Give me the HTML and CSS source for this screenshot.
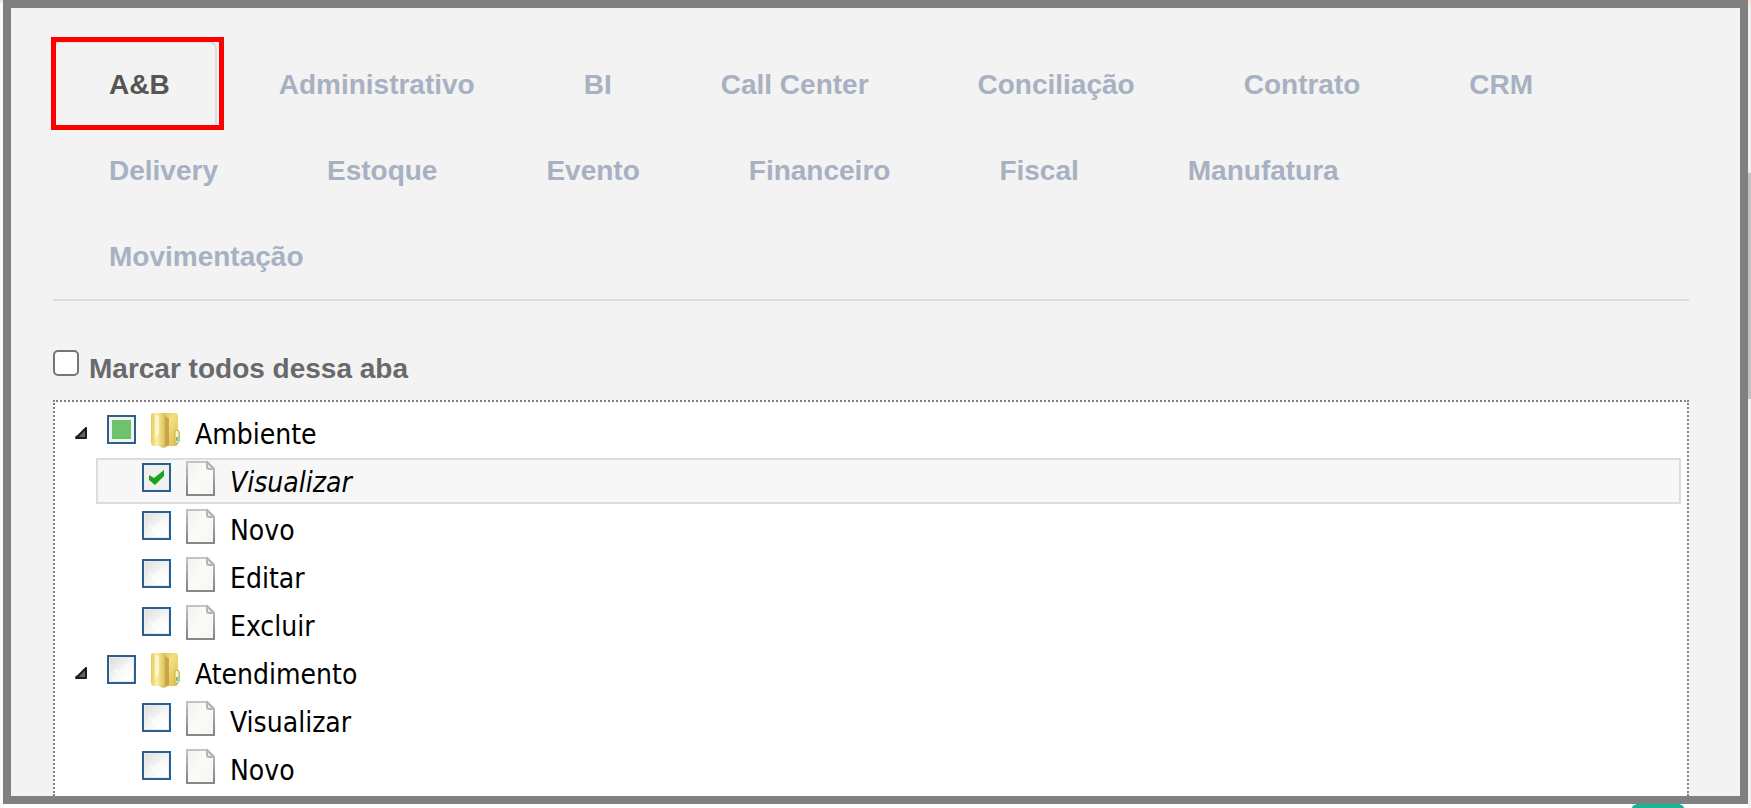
FILE: index.html
```html
<!DOCTYPE html>
<html lang="pt-BR">
<head>
  <meta charset="UTF-8">
  <meta name="viewport" content="width=device-width, initial-scale=1.0">
  <title>Permissões</title>
  <link rel="stylesheet" href="styles.css">
</head>
<body>
  <svg class="sprite" aria-hidden="true">
    <defs>
      <linearGradient id="paper" x1="0" y1="0" x2="1" y2="1">
        <stop offset="0" stop-color="#f2f3ef"/>
        <stop offset=".5" stop-color="#fbfbf8"/>
        <stop offset="1" stop-color="#f4f6f1"/>
      </linearGradient>
      <linearGradient id="edge" x1="0" y1="0" x2="0" y2="1">
        <stop offset="0" stop-color="#c3c5c1"/>
        <stop offset="1" stop-color="#7f827e"/>
      </linearGradient>
      <linearGradient id="goldFront" x1="0" y1="0" x2="1" y2="0">
        <stop offset="0" stop-color="#e3c75a"/>
        <stop offset=".4" stop-color="#fbf0a8"/>
        <stop offset="1" stop-color="#dcbf58"/>
      </linearGradient>
      <linearGradient id="goldBack" x1="0" y1="0" x2="1" y2="1">
        <stop offset="0" stop-color="#d5b44c"/>
        <stop offset=".35" stop-color="#f3e083"/>
        <stop offset="1" stop-color="#d9b840"/>
      </linearGradient>
      <linearGradient id="arrow" x1="0" y1="0" x2="1" y2="1">
        <stop offset="0" stop-color="#333"/>
        <stop offset="1" stop-color="#777"/>
      </linearGradient>
    </defs>
    <symbol id="i-doc" viewBox="0 0 29 35">
      <path d="M1 1h20l7 7v26H1z" fill="url(#paper)" stroke="url(#edge)" stroke-width="2"/>
      <path d="M21 1v5q0 2 2 2h5z" fill="#f0f0ee" stroke="#b3b5b1" stroke-width="2"/>
      <path d="M0 34h29" stroke="#868984" stroke-width="2"/>
    </symbol>
    <symbol id="i-folder" viewBox="0 0 29 35">
      <path d="M10 0h14q3 0 3 3v14l2 2v9l-2 2q0 3-3 3H12z" fill="url(#goldBack)"/>
      <path d="M12 1l6 5v26l-5 3z" fill="#c9a548"/>
      <path d="M3 0h8q3 1 3 4v30l-3 1-3-2H4q-4 0-4-3V3q0-3 3-3z" fill="url(#goldFront)"/>
      <path d="M4 3l4 1v16l-4 6z" fill="#fffbe0" opacity=".7"/>
      <path d="M24 19q0-2 2-2t2 2v9q0 2-2 2t-2-2z" fill="#f7f4d8" stroke="#d0ad3d"/>
      <path d="M25 24h2v4h-2z" fill="#58bfd8"/>
    </symbol>
    <symbol id="i-arrow" viewBox="0 0 14 13">
      <path d="M12 1v10H2q0-1 2-2z" fill="url(#arrow)" stroke="#1c1c1c" stroke-width="2" stroke-linejoin="round"/>
    </symbol>
  </svg>

  <div class="edge-left"></div>

  <main class="frame">
    <nav class="tabs" role="tablist">
      <button class="tab active" role="tab" aria-selected="true">A&amp;B</button>
      <button class="tab" role="tab">Administrativo</button>
      <button class="tab" role="tab">BI</button>
      <button class="tab" role="tab">Call Center</button>
      <button class="tab" role="tab">Conciliação</button>
      <button class="tab" role="tab">Contrato</button>
      <button class="tab" role="tab">CRM</button>
      <button class="tab" role="tab">Delivery</button>
      <button class="tab" role="tab">Estoque</button>
      <button class="tab" role="tab">Evento</button>
      <button class="tab" role="tab">Financeiro</button>
      <button class="tab" role="tab">Fiscal</button>
      <button class="tab" role="tab">Manufatura</button>
      <button class="tab" role="tab">Movimentação</button>
    </nav>

    <div class="mark-all">
      <input type="checkbox" id="markAll">
      <label for="markAll">Marcar todos dessa aba</label>
    </div>

    <ul class="tree">
      <li>
        <div class="node">
          <button class="toggle" aria-label="Recolher Ambiente"><svg><use href="#i-arrow"/></svg></button>
          <input type="checkbox" class="check partial" id="amb">
          <svg class="icon"><use href="#i-folder"/></svg>
          <label for="amb">Ambiente</label>
        </div>
        <ul>
          <li class="node selected">
            <input type="checkbox" class="check" id="amb-vis" checked>
            <svg class="icon"><use href="#i-doc"/></svg>
            <label for="amb-vis">Visualizar</label>
          </li>
          <li class="node">
            <input type="checkbox" class="check" id="amb-novo">
            <svg class="icon"><use href="#i-doc"/></svg>
            <label for="amb-novo">Novo</label>
          </li>
          <li class="node">
            <input type="checkbox" class="check" id="amb-edit">
            <svg class="icon"><use href="#i-doc"/></svg>
            <label for="amb-edit">Editar</label>
          </li>
          <li class="node">
            <input type="checkbox" class="check" id="amb-exc">
            <svg class="icon"><use href="#i-doc"/></svg>
            <label for="amb-exc">Excluir</label>
          </li>
        </ul>
      </li>
      <li>
        <div class="node">
          <button class="toggle" aria-label="Recolher Atendimento"><svg><use href="#i-arrow"/></svg></button>
          <input type="checkbox" class="check" id="ate">
          <svg class="icon"><use href="#i-folder"/></svg>
          <label for="ate">Atendimento</label>
        </div>
        <ul>
          <li class="node">
            <input type="checkbox" class="check" id="ate-vis">
            <svg class="icon"><use href="#i-doc"/></svg>
            <label for="ate-vis">Visualizar</label>
          </li>
          <li class="node">
            <input type="checkbox" class="check" id="ate-novo">
            <svg class="icon"><use href="#i-doc"/></svg>
            <label for="ate-novo">Novo</label>
          </li>
        </ul>
      </li>
    </ul>
  </main>

  <div class="edge-right"><div class="thumb"></div></div>
  <button class="chat" aria-label="Chat"></button>
</body>
</html>
```
FILE: styles.css
```css
* {
  box-sizing: border-box;
}
body {
  display: flex;
  position: relative;
  margin: 0;
  height: 100vh;
  overflow: hidden;
  background: #fff;
  font-family: "Liberation Sans", Arial, sans-serif;
}
ul {
  list-style: none;
  margin: 0;
  padding: 0;
}
button {
  border: none;
  background: none;
  padding: 0;
  font: inherit;
  cursor: pointer;
}
.sprite {
  position: absolute;
  width: 0;
  height: 0;
}

/* page edges around the frame */
.edge-left,
.edge-right {
  width: 3px;
  border-top: 3px solid #fbe0da;
}
.edge-left {
  background: #fafafa;
}
.edge-right {
  background: #f0f0f0;
}
.thumb {
  height: 226px;
  margin-top: 170px;
  background: #c1c1c1;
}

.frame {
  display: flex;
  flex-direction: column;
  flex: 1;
  position: relative;
  z-index: 1;
  margin-bottom: 4px;
  padding: 33px 51px 0 42px;
  border: 8px solid #808080;
  background: #f3f3f3;
  overflow: hidden;
}

/* tabs */
.tabs {
  display: flex;
  flex-wrap: wrap;
  padding-right: 40px;
  border-bottom: 2px solid #ddd;
}
.tab {
  position: relative;
  height: 86px;
  margin-right: 6px;
  padding: 0 45px 0 54px;
  border: 2px solid transparent;
  border-bottom: none;
  border-radius: 8px 8px 0 0;
  font-size: 28px;
  font-weight: bold;
  color: #a7b1c2;
}
.tab.active {
  border-color: #ddd;
  color: #555;
}
.tab.active::after {
  content: "";
  position: absolute;
  top: -6px;
  right: -9px;
  bottom: -3px;
  left: -4px;
  border: 5px solid #f00;
}

.mark-all {
  display: flex;
  gap: 10px;
  margin-top: 49px;
  height: 50px;
  font-size: 28px;
  line-height: 38px;
  font-weight: bold;
  color: #676a6c;
}
.mark-all input {
  appearance: none;
  width: 26px;
  height: 26px;
  margin: 0;
  border: 2px solid #767676;
  border-radius: 5px;
  background: #fff;
}

/* tree */
.tree {
  flex: 1;
  padding: 7px 6px 0;
  border: 2px dotted #808080;
  border-bottom: none;
  background: #fff;
  font-family: "DejaVu Sans Condensed", Tahoma, "Noto Sans", sans-serif;
  font-size: 28px;
  color: #000;
}
.tree ul {
  padding-left: 35px;
}
.node {
  display: flex;
  align-items: flex-start;
  height: 48px;
  padding: 4px 0 0 46px;
}
.tree div.node {
  padding-left: 13px;
}
.toggle {
  width: 14px;
  height: 13px;
  margin: 14px 19px 0 0;
}
.toggle svg {
  display: block;
  width: 14px;
  height: 13px;
}
.check {
  appearance: none;
  width: 29px;
  height: 29px;
  margin: 2px 15px 0 0;
  border: 2px solid #2a5f90;
  background: url("data:image/svg+xml,%3Csvg xmlns='http://www.w3.org/2000/svg' viewBox='0 0 25 25'%3E%3Cpath d='M5 11l5 3 10-9v6l-9 9-6-5z' fill='%23fff' opacity='.5'/%3E%3C/svg%3E") center / 25px 25px, linear-gradient(135deg, #dcdddb, #fff 75%);
  box-shadow: inset 0 0 0 1px #e6eef5;
}
.check.partial {
  background: #6fc16c;
  box-shadow: inset 0 0 0 3px #eef5ec;
}
.check:checked {
  background: url("data:image/svg+xml,%3Csvg xmlns='http://www.w3.org/2000/svg' viewBox='0 0 25 25'%3E%3Cpath d='M5 10l5 3 10-8v6l-9 9-6-5z' fill='%2318a51c'/%3E%3C/svg%3E") center / 25px 25px, #f0f1ef;
}
.icon {
  width: 29px;
  height: 35px;
  margin-right: 15px;
}
.node label {
  line-height: 44px;
}
.selected {
  height: 46px;
  margin: 1px 0;
  padding: 1px 0 0 44px;
  border: 2px solid #ddd;
  background: #f7f7f7;
  font-style: italic;
}

.chat {
  position: absolute;
  right: 67px;
  bottom: 0;
  width: 52px;
  height: 7px;
  border-radius: 26px 26px 0 0 / 7px 7px 0 0;
  background: #1ab394;
}
```
